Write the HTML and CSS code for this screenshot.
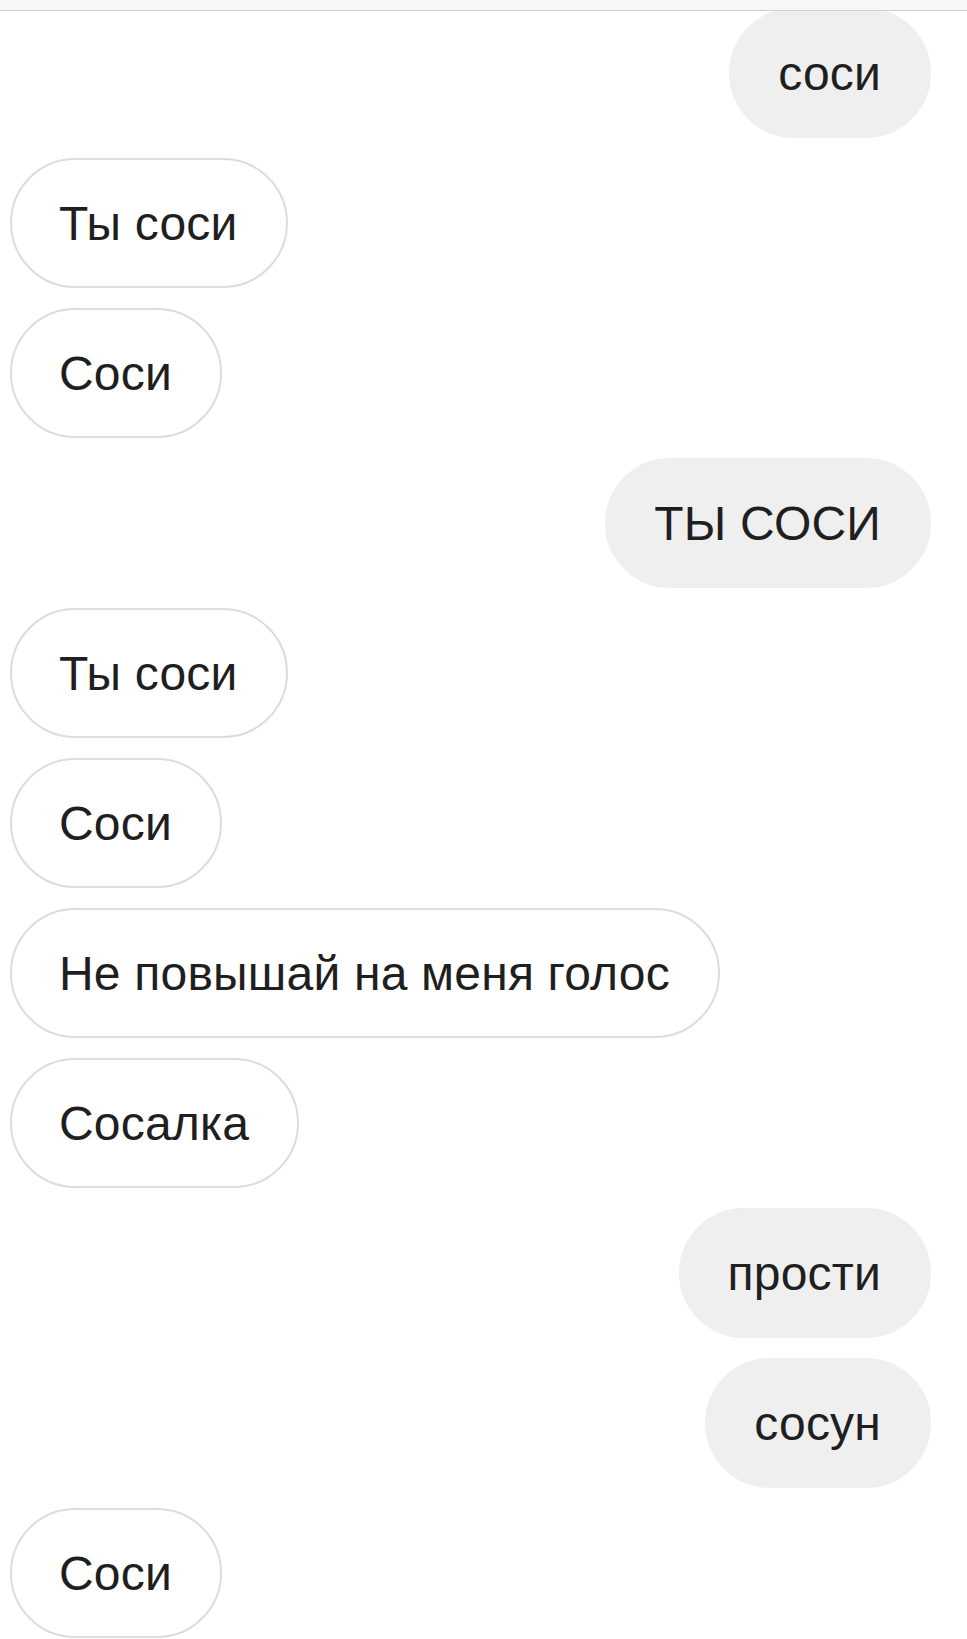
FILE: index.html
```html
<!DOCTYPE html>
<html lang="ru">
<head>
    <meta charset="UTF-8">
    <meta name="viewport" content="width=device-width, initial-scale=1.0">
    <title>Чат</title>
    <link rel="stylesheet" href="styles.css">
</head>
<body>
    <div class="topbar"></div>

    <div class="chat">
        <div class="msg msg-out">соси</div>
        <div class="msg msg-in">Ты соси</div>
        <div class="msg msg-in">Соси</div>
        <div class="msg msg-out">ТЫ СОСИ</div>
        <div class="msg msg-in">Ты соси</div>
        <div class="msg msg-in">Соси</div>
        <div class="msg msg-in">Не повышай на меня голос</div>
        <div class="msg msg-in">Сосалка</div>
        <div class="msg msg-out">прости</div>
        <div class="msg msg-out">сосун</div>
        <div class="msg msg-in">Соси</div>
    </div>
</body>
</html>
```

FILE: styles.css
```css
* {
    margin: 0;
    padding: 0;
    box-sizing: border-box;
}

html, body {
    overflow: hidden;
}

body {
    font-family: 'Liberation Sans', Arial, sans-serif;
    background: #fff;
    color: #1f1f1f;
}

/* полоска шапки поверх ленты */
.topbar {
    position: fixed;
    top: 0;
    left: 0;
    right: 0;
    height: 11px;
    background: #f7f7f7;
    border-bottom: 1px solid #cfcfcf;
    z-index: 2;
}

.chat {
    display: flex;
    flex-direction: column;
    gap: 20px;
    padding: 8px 36px 0 10px;
}

.msg {
    display: flex;
    align-items: center;
    height: 130px;
    padding: 0 48px 0 47px;
    border-radius: 65px;
    border: 2px solid #dcdcdc;
    font-size: 48px;
    letter-spacing: 0.2px;
    white-space: nowrap;
}

.msg-in {
    align-self: flex-start;
    background: #fff;
}

.msg-out {
    align-self: flex-end;
    background: #efefef;
    border-color: #efefef;
}
```
